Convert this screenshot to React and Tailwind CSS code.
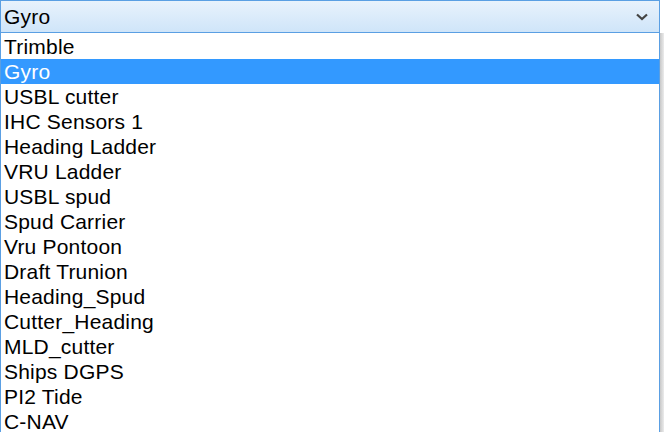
import React from "react";

const items = [
  "Trimble",
  "Gyro",
  "USBL cutter",
  "IHC Sensors 1",
  "Heading Ladder",
  "VRU Ladder",
  "USBL spud",
  "Spud Carrier",
  "Vru Pontoon",
  "Draft Trunion",
  "Heading_Spud",
  "Cutter_Heading",
  "MLD_cutter",
  "Ships DGPS",
  "PI2 Tide",
  "C-NAV",
];

export default function App() {
  return (
    <div
      className="w-[664px] h-[432px] overflow-hidden bg-white flex flex-col"
      style={{ fontFamily: '"Liberation Sans", Arial, sans-serif' }}
    >
      <div className="flex h-[33px] shrink-0">
        <div className="w-[660px] h-[33px] border border-[#5a9fe3] bg-gradient-to-b from-[#e8f2fc] to-[#cfe5f9] flex items-center justify-between pl-[3px] pr-[11px]">
          <span className="text-[21px] tracking-[0.2px] leading-none text-black">Gyro</span>
          <svg width="12" height="8" viewBox="0 0 12 8">
            <path d="M1 1.5 L6 6 L11 1.5" fill="none" stroke="#444" strokeWidth="2.2" />
          </svg>
        </div>
        <div className="w-[4px] bg-white" />
      </div>
      <div className="flex flex-1 min-h-0">
        <div className="w-[660px] border-x border-[#5a9fe3] bg-white flex flex-col overflow-hidden">
          <div className="h-[1px] shrink-0" />
          {items.map((it, i) => (
            <div
              key={it}
              className={
                "h-[25px] shrink-0 flex items-center pl-[3px] text-[21px] tracking-[0.2px] leading-none " +
                (i === 1 ? "bg-[#3399ff] text-white" : "text-black")
              }
            >
              {it}
            </div>
          ))}
        </div>
        <div className="w-[4px] bg-gradient-to-r from-[#c8c8c8] to-[#ececec]" />
      </div>
    </div>
  );
}
